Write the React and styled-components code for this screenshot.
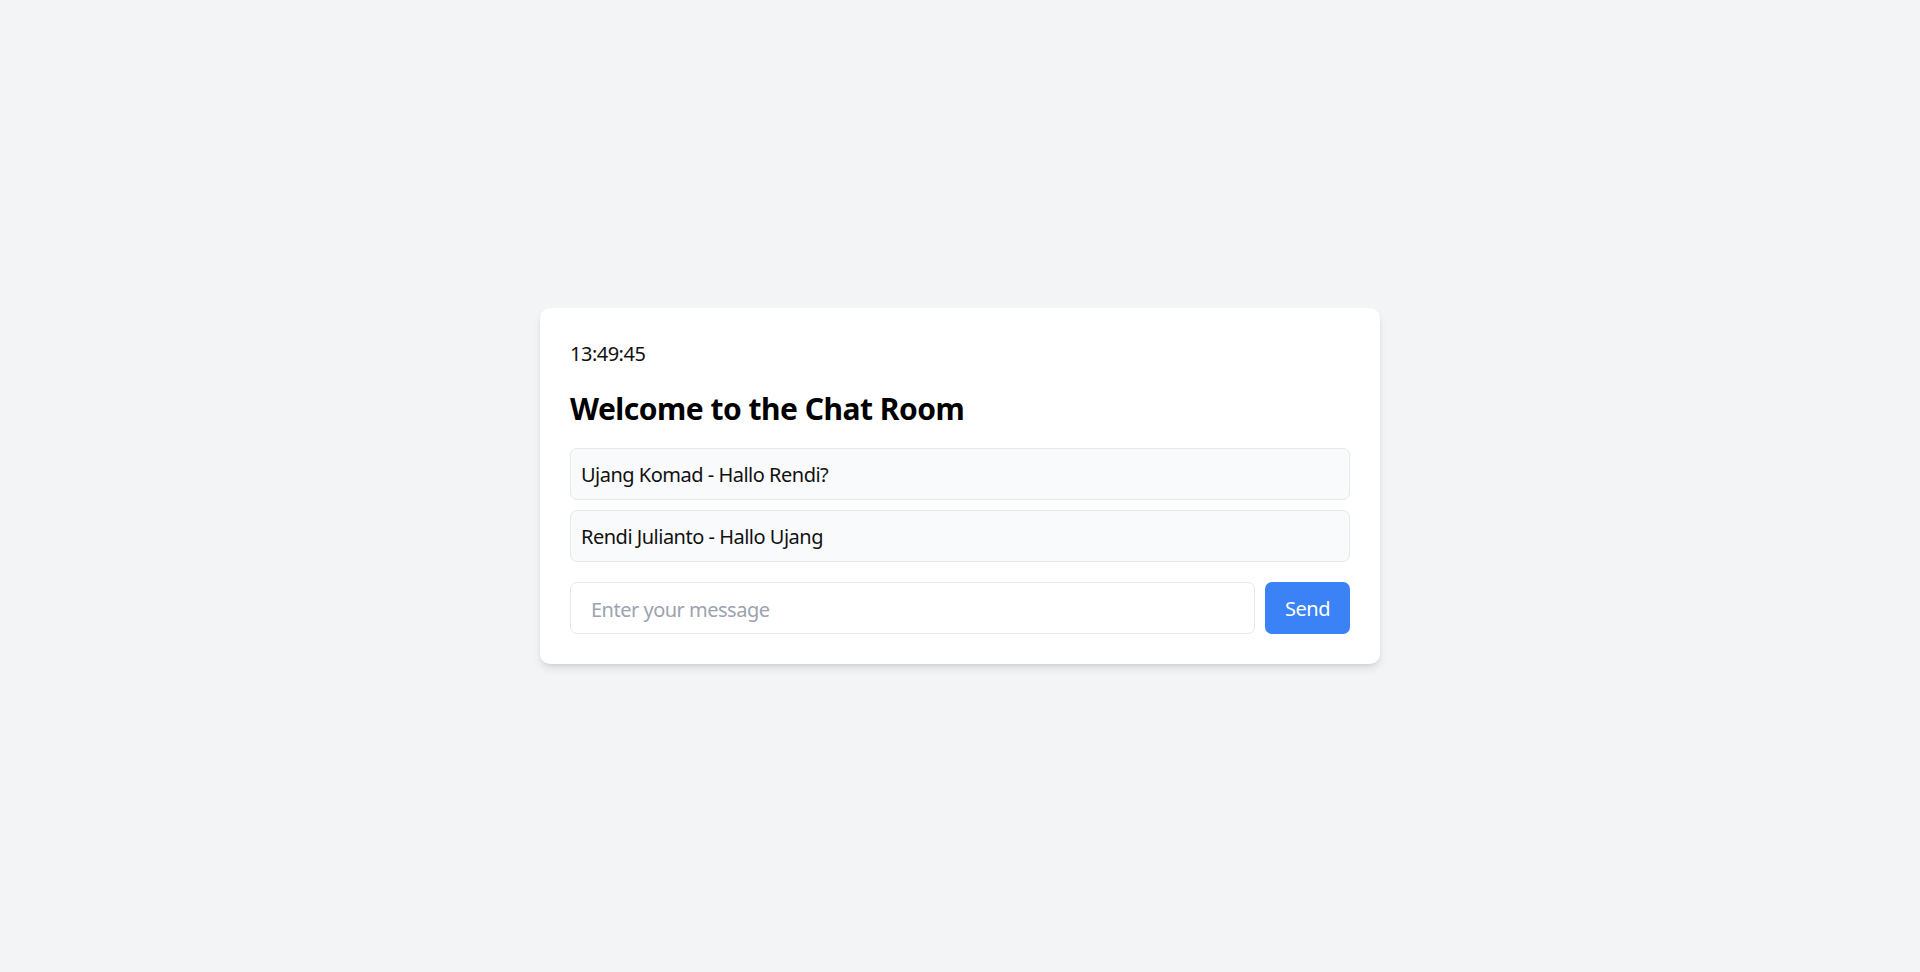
import React, { useState } from 'react';
import styled, { createGlobalStyle } from 'styled-components';

const GlobalStyle = createGlobalStyle`
  * { box-sizing: border-box; }
  html, body {
    margin: 0;
    padding: 0;
    background: #f3f4f6;
    font-family: "Noto Sans", "Open Sans", "Liberation Sans", sans-serif;
    font-size: 20px;
    line-height: 1.5;
    letter-spacing: -0.025em;
    color: #111;
  }
`;

const Page = styled.div`
  min-height: 972px;
  display: flex;
  align-items: center;
  justify-content: center;
`;

const Card = styled.div`
  width: 840px;
  background: #ffffff;
  border-radius: 10px;
  padding: 30px;
  box-shadow: 0 5px 8px -1px rgba(0, 0, 0, 0.1), 0 2px 5px -2px rgba(0, 0, 0, 0.1);
`;

const Clock = styled.div`
  font-size: 20px;
  line-height: 30px;
  color: #111;
  padding-top: 1px;
  margin-bottom: 19px;
`;

const Title = styled.h1`
  margin: 0 0 19px;
  padding-top: 1px;
  font-size: 30px;
  line-height: 40px;
  font-weight: 700;
  color: #000;
`;

const MessageList = styled.div`
  display: flex;
  flex-direction: column;
  gap: 10px;
  margin-bottom: 20px;
`;

const Message = styled.div`
  background: #f9fafb;
  border: 1px solid #e5e7eb;
  border-radius: 7px;
  padding: 11px 10px 9px;
  line-height: 30px;
  color: #111;
`;

const Composer = styled.form`
  display: flex;
  gap: 10px;
`;

const Input = styled.input`
  flex: 1;
  height: 52px;
  border: 1px solid #e5e7eb;
  border-radius: 7px;
  padding: 2px 20px 0;
  font: inherit;
  letter-spacing: inherit;
  color: #111;
  outline: none;

  &::placeholder {
    color: #9ca3af;
  }
`;

const SendButton = styled.button`
  height: 52px;
  padding: 2px 20px 0;
  border: none;
  border-radius: 7px;
  background: #3b82f6;
  color: #ffffff;
  font: inherit;
  letter-spacing: inherit;
  cursor: pointer;
`;

export default function App() {
  const [text, setText] = useState('');
  const messages = [
    { id: 1, name: 'Ujang Komad', body: 'Hallo Rendi?' },
    { id: 2, name: 'Rendi Julianto', body: 'Hallo Ujang' },
  ];

  return (
    <>
      <GlobalStyle />
      <Page>
        <Card>
          <Clock>13:49:45</Clock>
          <Title>Welcome to the Chat Room</Title>
          <MessageList>
            {messages.map((m) => (
              <Message key={m.id}>
                {m.name} - {m.body}
              </Message>
            ))}
          </MessageList>
          <Composer onSubmit={(e) => e.preventDefault()}>
            <Input
              value={text}
              onChange={(e) => setText(e.target.value)}
              placeholder="Enter your message"
            />
            <SendButton type="submit">Send</SendButton>
          </Composer>
        </Card>
      </Page>
    </>
  );
}
